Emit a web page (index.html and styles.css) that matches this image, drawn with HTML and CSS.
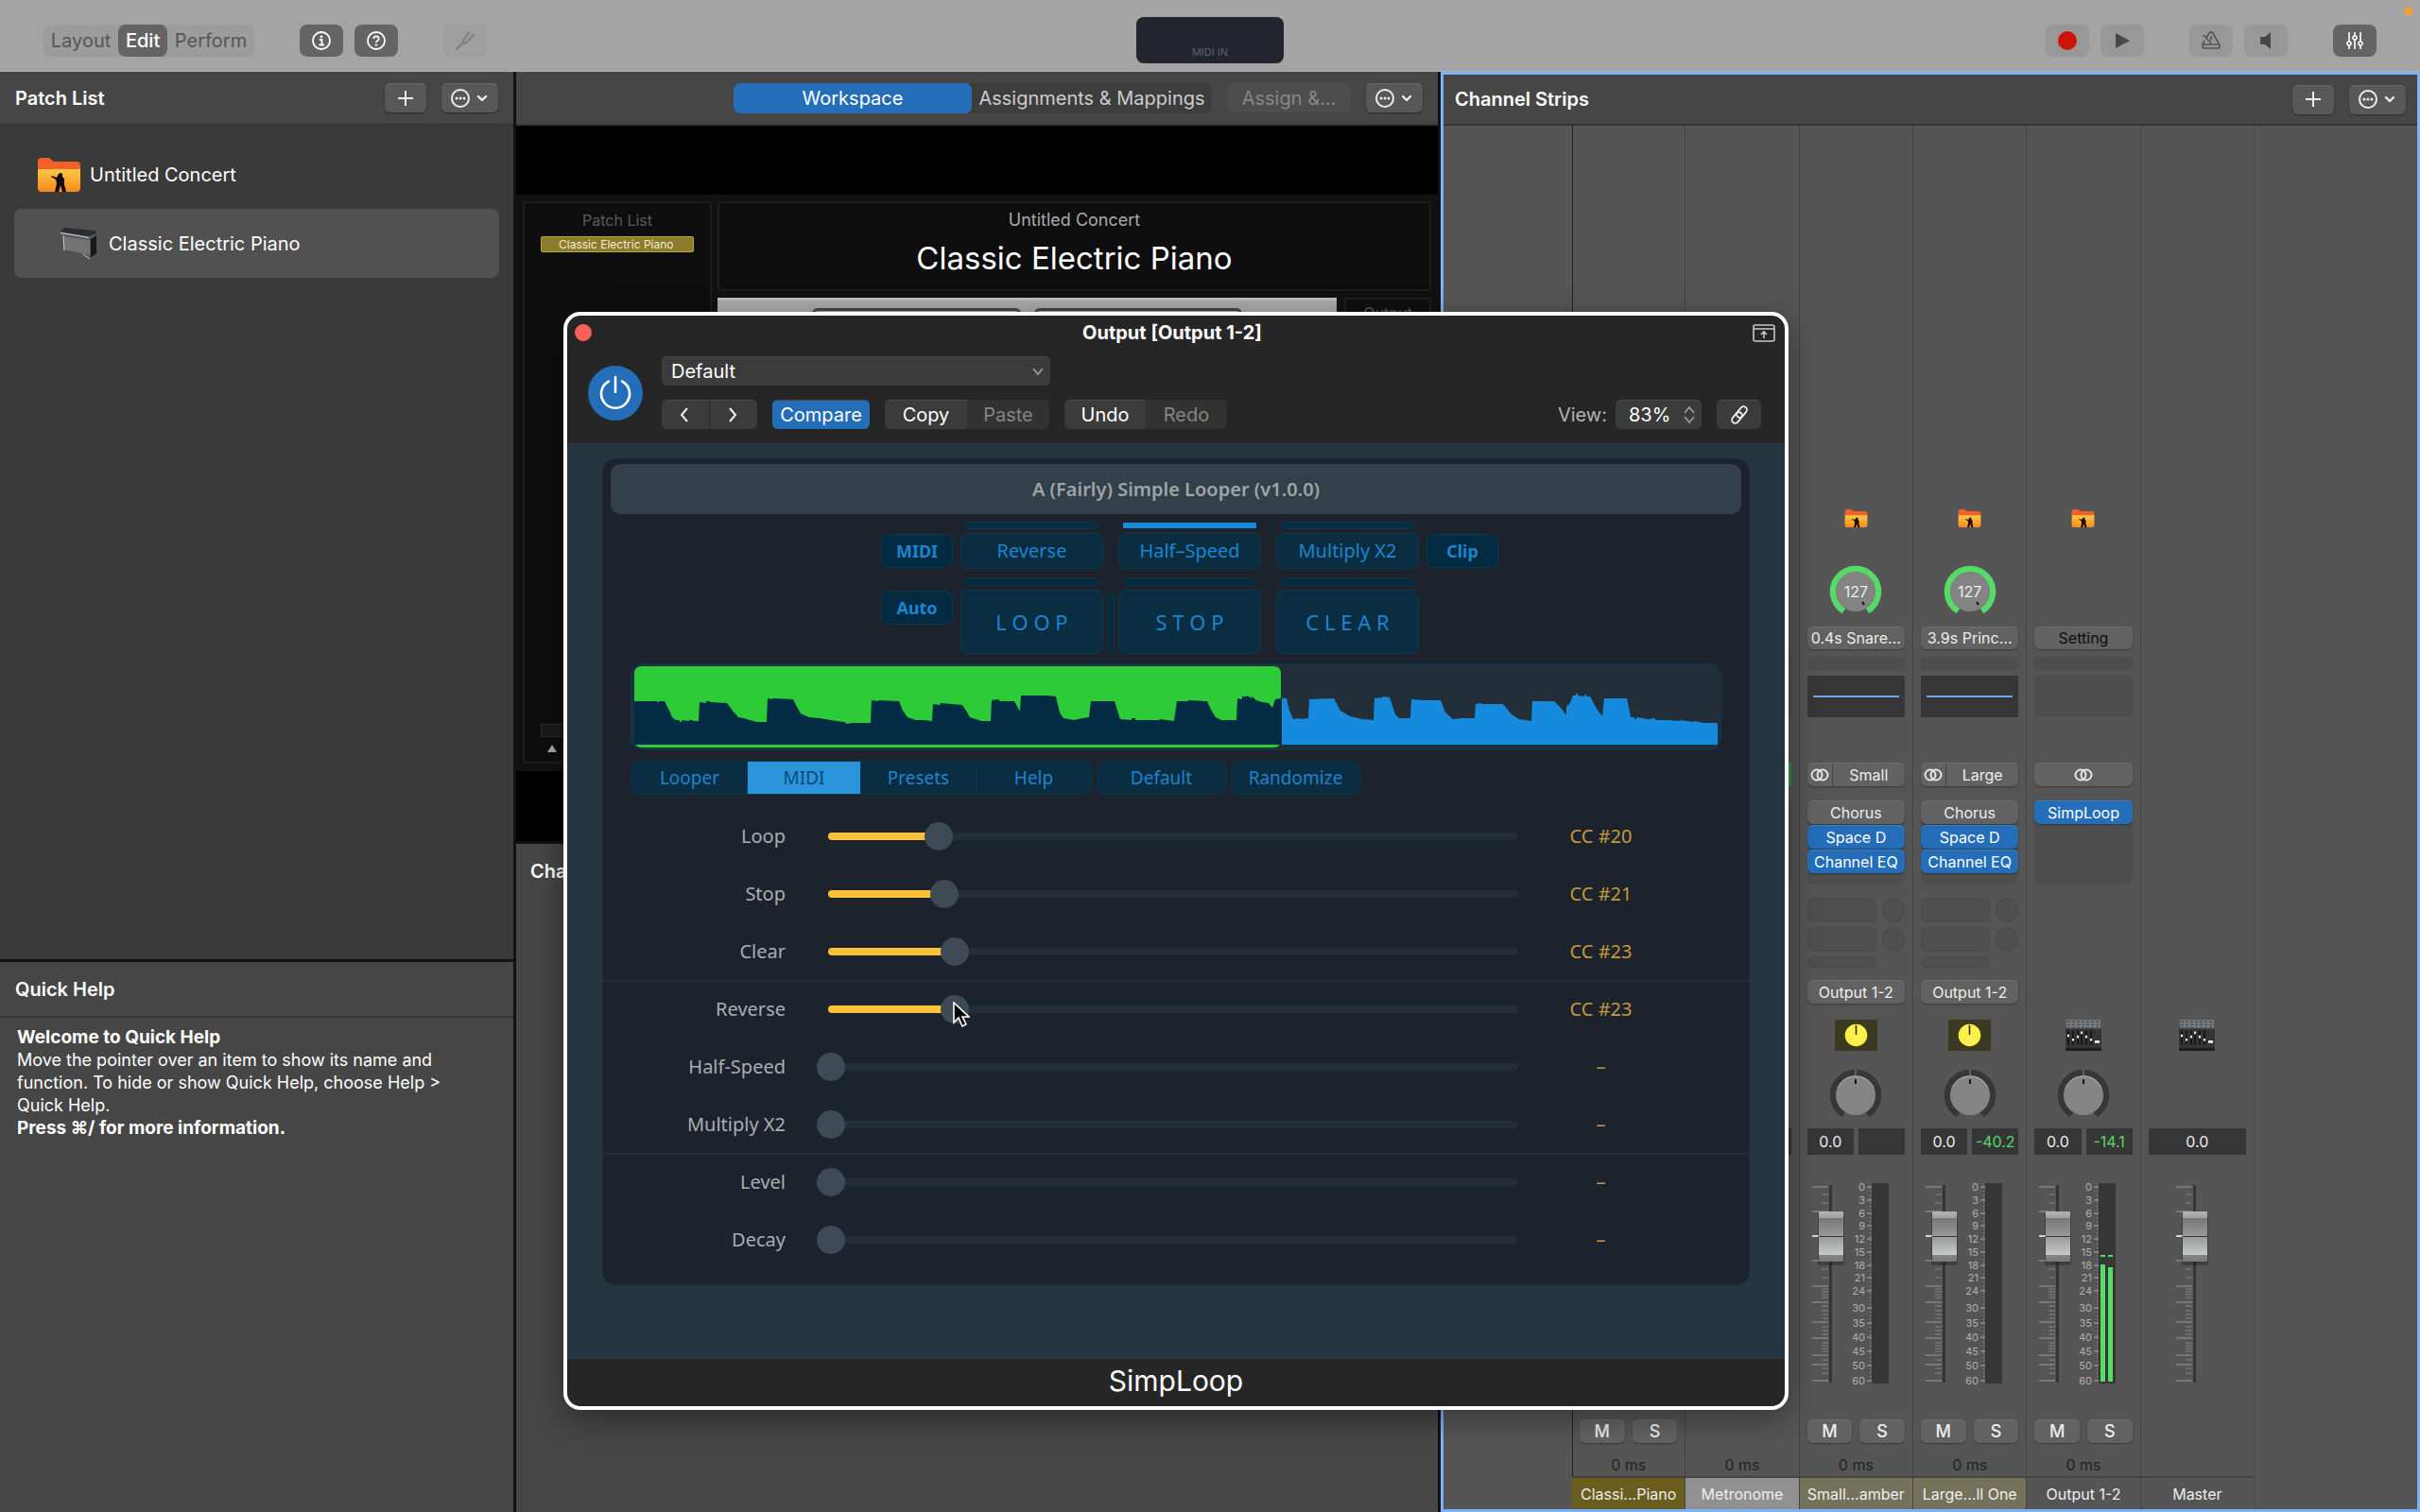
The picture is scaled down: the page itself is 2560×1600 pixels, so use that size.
FILE: index.html
```html
<!DOCTYPE html>
<html lang="en">
<head>
<meta charset="utf-8">
<title>Untitled Concert</title>
<link rel="stylesheet" href="styles.css">
</head>
<body>
<svg class="defs" aria-hidden="true">
  <defs>
    <linearGradient id="g-folder" x1="0" y1="0" x2="0" y2="1"><stop offset="0" stop-color="#ffc844"/><stop offset="1" stop-color="#f88a1c"/></linearGradient>
    <linearGradient id="g-cap" x1="0" y1="0" x2="0" y2="1">
      <stop offset="0" stop-color="#b4b4b4"/><stop offset=".13" stop-color="#a0a0a0"/><stop offset=".14" stop-color="#787878"/><stop offset=".48" stop-color="#989898"/>
      <stop offset=".52" stop-color="#9c9c9c"/><stop offset=".86" stop-color="#c6c9ca"/><stop offset=".87" stop-color="#858585"/><stop offset="1" stop-color="#7a7a7a"/>
    </linearGradient>
    <symbol id="i-folder" viewBox="0 0 45 36">
      <path d="M0 4q0-4 4-4h8l5 4h24q4 0 4 4v5H0z" fill="#f4602a"/>
      <path d="M0 12h45v20q0 4-4 4H4q-4 0-4-4z" fill="url(#g-folder)"/>
      <path d="M22 17q2-2 4 0v3l2 2v6l2 8h-4l-2-7-2 7h-4l2-9-1-4-5-3 1-1 5 2z" fill="#140c04"/>
    </symbol>
    <symbol id="i-more" viewBox="0 0 40 20">
      <circle cx="10" cy="10" r="9" fill="none" stroke="#eee" stroke-width="2"/>
      <circle cx="6" cy="10" r="1.5" fill="#eee"/><circle cx="10" cy="10" r="1.5" fill="#eee"/><circle cx="14" cy="10" r="1.5" fill="#eee"/>
      <path d="M29 8l4 4 4-4" fill="none" stroke="#eee" stroke-width="2.4" stroke-linecap="round" stroke-linejoin="round"/>
    </symbol>
    <symbol id="i-plus" viewBox="0 0 16 16"><path d="M8 0v16M0 8h16" stroke="#eee" stroke-width="2"/></symbol>
    <symbol id="i-stereo" viewBox="0 0 20 14"><g fill="none" stroke="#e6e6e6" stroke-width="2"><circle cx="7" cy="7" r="5.5"/><circle cx="13" cy="7" r="5.5"/></g></symbol>
    <symbol id="i-level" viewBox="0 0 56 56">
      <path d="M15.5 48.5A24 24 0 1 1 40.5 48.5" fill="none" stroke="#56db69" stroke-width="6.5"/>
      <circle cx="28" cy="28" r="21" fill="#838383"/><path d="M35 39l2 3" stroke="#111" stroke-width="2"/>
    </symbol>
    <symbol id="i-pan" viewBox="0 0 56 56">
      <path d="M15.5 48.5A24 24 0 1 1 40.5 48.5" fill="none" stroke="#373737" stroke-width="6.5"/>
      <path d="M28 1v6" stroke="#888"/><circle cx="28" cy="28" r="21" fill="#858585"/><path d="M9 20a21 21 0 0 1 38 0" fill="none" stroke="#aaa"/><path d="M28 11v5" stroke="#111" stroke-width="2"/>
    </symbol>
    <symbol id="i-aux" viewBox="0 0 45 33"><rect width="45" height="33" rx="2" fill="#3b391f"/><circle cx="22.500" cy="16.500" r="11.800" fill="#fdf04a"/><path d="M22.500 6v10" stroke="#222" stroke-width="1.500"/></symbol>
    <symbol id="i-desk" viewBox="0 0 38 31" preserveAspectRatio="none">
      <path d="M1 0h36v9H1z" fill="#757b78"/><path d="M2 2h34M2 5h34M2 8h34" stroke="#3c4a5c" stroke-dasharray="3 2"/><path d="M0 9h38v19H0z" fill="#343434"/><path d="M0 28h38v3H0z" fill="#1c1c1c"/>
      <path d="M3 11v14M8 11v14M13 11v14M17 11v14M22 11v14M27 11v14" stroke="#0e0e0e" stroke-width="1.500"/>
      <path d="M2 16h2M7 20h2M12 17h2M16 13h2M21 17h2M26 20h2M31 22h5" stroke="#eee" stroke-width="2.500"/>
    </symbol>
    <symbol id="i-fader" viewBox="0 0 40 218">
      <path d="M5 7h17M5 33h17M5 85h17M5 112h17M5 129h17M5 150h17M5 167h17M5 185h17M5 195h17M5 212h17" stroke="#9c9c9c" stroke-width="1.200"/>
      <path d="M15 15h7M15 24h7M15 94h7M15 103h7M15 115h7M15 118h7M15 121h7M15 124h7M15 133h7M15 138h7M15 142h7M15 146h7M15 155h7M15 159h7M15 163h7M15 172h7M15 175h7M15 178h7M15 181h7M15 190h7M15 199h7M15 204h7" stroke="#858585"/>
      <rect x="23" y="5" width="3" height="209" rx="1" fill="#353535"/>
      <path d="M5 59h8" stroke="#fff" stroke-width="1.500"/>
      <rect x="11" y="35" width="28" height="55" rx="2" fill="#000" opacity=".25"/>
      <rect x="12" y="33" width="26" height="53" rx="1" fill="url(#g-cap)"/>
      <path d="M12 59.500h26" stroke="#383838"/>
    </symbol>
    <symbol id="i-scale" viewBox="0 0 104 218">
      <g class="scale-text" text-anchor="end">
        <text x="61" y="11">0</text><text x="61" y="25">3</text><text x="61" y="39">6</text><text x="61" y="52">9</text><text x="61" y="66">12</text><text x="61" y="80">15</text><text x="61" y="94">18</text><text x="61" y="107">21</text><text x="61" y="121">24</text><text x="61" y="139">30</text><text x="61" y="155">35</text><text x="61" y="170">40</text><text x="61" y="185">45</text><text x="61" y="200">50</text><text x="61" y="216">60</text>
      </g>
      <path d="M63 7h5M63 21h5M63 35h5M63 48h5M63 62h5M63 76h5M63 90h5M63 103h5M63 117h5M63 135h5M63 151h5M63 166h5M63 181h5M63 196h5M63 212h5" stroke="#aaa"/>
      <path d="M66.500 7v205" stroke="#999" stroke-dasharray="1 3"/>
      <rect x="68" y="3" width="18" height="212" rx="2" fill="#363636"/>
    </symbol>
  </defs>
</svg>

<header class="toolbar">
  <div class="tools">
    <div class="modes"><button>Layout</button><button class="on">Edit</button><button>Perform</button></div>
    <div class="pair">
      <button class="tool dark" aria-label="Inspector"><svg width="20" height="20" viewBox="0 0 20 20"><circle cx="10" cy="10" r="9" fill="none" stroke="#fff" stroke-width="1.800"/><path d="M8 9h2.500v5.500M7.500 14.500h5.500" fill="none" stroke="#fff" stroke-width="1.800"/><circle cx="10" cy="5.800" r="1.400" fill="#fff"/></svg></button>
      <button class="tool dark" aria-label="Quick Help"><svg width="20" height="20" viewBox="0 0 20 20"><circle cx="10" cy="10" r="9" fill="none" stroke="#fff" stroke-width="1.800"/><path d="M7.300 8q0-2.700 2.700-2.700T12.700 8q0 1.500-1.500 2.200T10 12" fill="none" stroke="#fff" stroke-width="1.800"/><circle cx="10" cy="14.600" r="1.200" fill="#fff"/></svg></button>
    </div>
    <button class="tool faint" aria-label="Tuner"><svg width="22" height="22" viewBox="0 0 22 22"><path d="M2 20l6-6M15 2l-6 9q-2 4 1 3t4-3l6-6" fill="none" stroke="#7e7e7e" stroke-width="2" stroke-linecap="round"/></svg></button>
  </div>
  <div class="lcd">MIDI IN</div>
  <div class="tools end">
    <div class="pair">
      <button class="tool" aria-label="Record"><svg width="20" height="20"><circle cx="10" cy="10" r="10" fill="#cc1508"/></svg></button>
      <button class="tool" aria-label="Play"><svg width="16" height="18"><path d="M1 1l15 8-15 8z" fill="#484848"/></svg></button>
    </div>
    <div class="pair">
      <button class="tool" aria-label="Metronome"><svg width="22" height="20" viewBox="0 0 22 20"><path d="M6 7l3-5q2-2 4 0l6 11M4 10l-2 4M2 14h18v2q0 2-2 2H4q-2 0-2-2zM3 4l8 9M11 5v5" fill="none" stroke="#555" stroke-width="1.700"/></svg></button>
      <button class="tool" aria-label="Mute"><svg width="14" height="18"><path d="M1 6q0-1 1-1h4l6-5v18l-6-5H2q-1 0-1-1z" fill="#484848"/></svg></button>
    </div>
    <button class="tool dark" aria-label="Mixer"><svg width="20" height="20" viewBox="0 0 20 20"><path d="M4 1v18M10 1v18M16 1v18" stroke="#fff" stroke-width="1.600"/><g fill="#646464" stroke="#fff" stroke-width="1.600"><circle cx="4" cy="13" r="2"/><circle cx="10" cy="7" r="2"/><circle cx="16" cy="13" r="2"/></g></svg></button>
  </div>
  <span class="privacy-dot"></span>
</header>

<main class="desk">
  <aside class="side">
    <header class="head"><h2>Patch List</h2><button class="btn sq" aria-label="Add"><svg width="16" height="16"><use href="#i-plus"/></svg></button><button class="btn menu" aria-label="Actions"><svg width="40" height="20"><use href="#i-more"/></svg></button></header>
    <ul class="patches">
      <li><svg width="45" height="36"><use href="#i-folder"/></svg>Untitled Concert</li>
      <li class="patch on"><svg width="40" height="34" viewBox="0 0 40 34"><path d="M1 4L5 0l33 3 1 4v20l-6 4V12L1 8z" fill="#2a2c2f"/><path d="M1 4l30 5 8-3v3l-7 4L1 8z" fill="#55585c"/><path d="M1 5l30 5v1L1 6z" fill="#d5d8db"/><path d="M4 9l28 4v16L5 23z" fill="#737373"/><path d="M4 8l1 16M25 28l7 5" stroke="#ccc" fill="none"/><path d="M33 12l6-4v19l-6 4z" fill="#17181a"/></svg>Classic Electric Piano</li>
    </ul>
    <section class="help">
      <header class="head"><h2>Quick Help</h2></header>
      <p><b>Welcome to Quick Help</b><br>Move the pointer over an item to show its name and function. To hide or show Quick Help, choose Help &gt; Quick Help.<br><b>Press ⌘/ for more information.</b></p>
    </section>
  </aside>

  <section class="work">
    <header class="head right">
      <div class="views"><button class="on">Workspace</button><button>Assignments &amp; Mappings</button></div>
      <button class="btn assign" disabled>Assign &amp;...</button>
      <button class="btn menu" aria-label="Actions"><svg width="40" height="20"><use href="#i-more"/></svg></button>
    </header>
    <div class="stage">
      <div class="concert">
        <div class="box list"><span class="cap">Patch List</span><span class="chip">Classic Electric Piano</span><span class="slot-bar"></span><svg width="10" height="8"><path d="M5 0l5 8H0z" fill="#aaa"/></svg></div>
        <div class="right-side">
          <div class="box name"><p>Untitled Concert</p><h1>Classic Electric Piano</h1></div>
          <div class="instrument"><div class="keys"><i></i><i></i></div><div class="box out">Output</div></div>
        </div>
      </div>
    </div>
    <header class="head plain"><h2>Channel Strips</h2></header>
  </section>

  <section class="mixer">
    <header class="head"><h2>Channel Strips</h2><button class="btn sq" aria-label="Add channel"><svg width="16" height="16"><use href="#i-plus"/></svg></button><button class="btn menu" aria-label="Actions"><svg width="40" height="20"><use href="#i-more"/></svg></button></header>
    <div class="strips">
      <div class="strip">
        <div class="ms"><button class="btn">M</button><button class="btn">S</button></div><div class="delay">0 ms</div><div class="label gold">Classi...Piano</div>
      </div>
      <div class="strip">
        <div class="gain"></div><div class="eq off"></div><div class="io"><span class="green"></span></div><div class="fx"></div><div class="vals"><span></span></div>
        <div class="delay">0 ms</div><div class="label silver">Metronome</div>
      </div>
      <div class="strip">
        <svg class="folder" width="25" height="19"><use href="#i-folder"/></svg>
        <div class="knob"><svg width="56" height="56"><use href="#i-level"/></svg><span>127</span></div>
        <button class="btn setting">0.4s Snare...</button><div class="gain"></div><div class="eq"></div>
        <div class="io"><button class="btn st" aria-label="Format"><svg width="20" height="14"><use href="#i-stereo"/></svg></button><button class="btn">Small</button></div>
        <div class="fx"><button class="btn">Chorus</button><button class="btn blue">Space D</button><button class="btn blue">Channel EQ</button></div>
        <div class="sends"><i></i><b></b><i></i><b></b><i></i></div>
        <button class="btn dest">Output 1-2</button>
        <svg class="kind" width="45" height="33"><use href="#i-aux"/></svg>
        <svg class="pan" width="56" height="56"><use href="#i-pan"/></svg>
        <div class="vals"><span>0.0</span><span></span></div>
        <svg class="fader" width="104" height="218"><use href="#i-scale" width="104" height="218"/><use href="#i-fader" width="40" height="218"/></svg>
        <div class="ms"><button class="btn">M</button><button class="btn">S</button></div><div class="delay">0 ms</div><div class="label olive">Small...amber</div>
      </div>
      <div class="strip">
        <svg class="folder" width="25" height="19"><use href="#i-folder"/></svg>
        <div class="knob"><svg width="56" height="56"><use href="#i-level"/></svg><span>127</span></div>
        <button class="btn setting">3.9s Princ...</button><div class="gain"></div><div class="eq"></div>
        <div class="io"><button class="btn st" aria-label="Format"><svg width="20" height="14"><use href="#i-stereo"/></svg></button><button class="btn">Large</button></div>
        <div class="fx"><button class="btn">Chorus</button><button class="btn blue">Space D</button><button class="btn blue">Channel EQ</button></div>
        <div class="sends"><i></i><b></b><i></i><b></b><i></i></div>
        <button class="btn dest">Output 1-2</button>
        <svg class="kind" width="45" height="33"><use href="#i-aux"/></svg>
        <svg class="pan" width="56" height="56"><use href="#i-pan"/></svg>
        <div class="vals"><span>0.0</span><span class="lit">-40.2</span></div>
        <svg class="fader" width="104" height="218"><use href="#i-scale" width="104" height="218"/><use href="#i-fader" width="40" height="218"/></svg>
        <div class="ms"><button class="btn">M</button><button class="btn">S</button></div><div class="delay">0 ms</div><div class="label olive">Large...ll One</div>
      </div>
      <div class="strip">
        <svg class="folder" width="25" height="19"><use href="#i-folder"/></svg>
        <button class="btn setting unset">Setting</button><div class="gain"></div><div class="eq off"></div>
        <div class="io"><button class="btn" aria-label="Format"><svg width="20" height="14"><use href="#i-stereo"/></svg></button></div>
        <div class="fx"><button class="btn blue">SimpLoop</button></div>
        <svg class="kind" width="38" height="33"><use href="#i-desk"/></svg>
        <svg class="pan" width="56" height="56"><use href="#i-pan"/></svg>
        <div class="vals"><span>0.0</span><span class="lit">-14.1</span></div>
        <svg class="fader" width="104" height="218"><use href="#i-scale" width="104" height="218"/><use href="#i-fader" width="40" height="218"/><path d="M70 89h5v124h-5zM78 92h5v121h-5zM70 79h5v2h-5zM78 79h5v2h-5z" fill="#56db69"/></svg>
        <div class="ms"><button class="btn">M</button><button class="btn">S</button></div><div class="delay">0 ms</div><div class="label">Output 1-2</div>
      </div>
      <div class="strip">
        <svg class="kind" width="38" height="33"><use href="#i-desk"/></svg>
        <div class="vals"><span>0.0</span></div>
        <svg class="fader" width="104" height="218"><use href="#i-fader" x="24" width="40" height="218"/></svg>
        <div class="label">Master</div>
      </div>
    </div>
  </section>
</main>

<section class="plugin" aria-label="Output [Output 1-2]">
  <header class="titlebar"><button class="close" aria-label="Close"></button><h2>Output [Output 1-2]</h2><svg width="24" height="19" viewBox="0 0 24 19"><rect x="1" y="1" width="22" height="17" rx="2" fill="none" stroke="#c8c8c8" stroke-width="1.600"/><path d="M1 5h22M12 15V8M9 11l3-3 3 3" fill="none" stroke="#c8c8c8" stroke-width="1.600"/></svg></header>
  <div class="controls">
    <button class="power" aria-label="Power"><svg width="36" height="36" viewBox="0 0 36 36"><path d="M11 5.500a15 15 0 1 0 14 0M18 1v16" fill="none" stroke="#fff" stroke-width="2.600" stroke-linecap="round"/></svg></button>
    <div class="rows">
      <div class="pick"><select aria-label="Preset"><option>Default</option></select><svg width="12" height="8"><path d="M1 1l5 6 5-6" fill="none" stroke="#999" stroke-width="1.800"/></svg></div>
      <div class="row">
        <div class="group nav"><button aria-label="Previous"><svg width="10" height="18"><path d="M9 2L3 9l6 7" fill="none" stroke="#eee" stroke-width="2"/></svg></button><button aria-label="Next"><svg width="10" height="18"><path d="M1 2l6 7-6 7" fill="none" stroke="#eee" stroke-width="2"/></svg></button></div>
        <div class="group"><button class="compare">Compare</button></div>
        <div class="group copy"><button>Copy</button><button disabled>Paste</button></div>
        <div class="group undo"><button>Undo</button><button disabled>Redo</button></div>
        <label class="view" for="zoom">View:</label>
        <div class="pick zoom"><select id="zoom"><option>83%</option></select><svg width="12" height="18"><path d="M1 7l5-6 5 6M1 11l5 6 5-6" fill="none" stroke="#999" stroke-width="1.800"/></svg></div>
        <div class="group"><button class="link" aria-label="Link"><svg width="22" height="22" viewBox="0 0 22 22"><g fill="none" stroke="#eee" stroke-width="1.800"><rect x="7" y="4.500" width="13" height="7" rx="3.500" transform="rotate(-50 13.500 8)"/><rect x="2" y="10.500" width="13" height="7" rx="3.500" transform="rotate(-50 8.500 14)"/></g></svg></button></div>
      </div>
    </div>
  </div>
  <div class="body">
    <div class="looper">
      <h3>A (Fairly) Simple Looper (v1.0.0)</h3>
      <div class="pads">
        <i class="led c2"></i><i class="led c4 on"></i><i class="led c6"></i>
        <button class="small c1">MIDI</button><button class="pad c2">Reverse</button><button class="pad c4">Half–Speed</button><button class="pad c6">Multiply X2</button><button class="small c7">Clip</button>
        <i class="led low c2"></i><i class="led low c4"></i><i class="led low c6"></i>
        <button class="small c1">Auto</button><button class="pad big c2">L O O P</button><i class="bar c3"></i><button class="pad big c4">S T O P</button><button class="pad big c6">C L E A R</button>
      </div>
      <svg class="wave" viewBox="0 0 1154 92" preserveAspectRatio="none">
        <rect x="1" y="1" width="1152" height="90" rx="12" fill="#232f38" stroke="#12334a" stroke-width="2"/>
        <path d="M12 3H680q8 0 8 8V81q0 8-8 8H12q-8 0-8-8V11q0-8 8-8z" fill="#2ccb37"/>
        <path fill="#022c43" d="M4 86V40H28V41H30V40H36L39 46 41 50 44 57 48 60H52V62H54V60L62 61V60H66V61H72L73 41 80 42V40H84V41L102 42 108 50 114 57 120 58 126 60 134 62 144 62 145 37 150 38V37L172 38 176 46 180 53 189 57 200 58 218 61 226 62 229 64 234 63H254L255 39 262 40V39L284 40 288 50 293 57 302 60H310L319 61 320 43 328 44V42L351 44 355 50 359 57 371 61H381L382 39 390 38V40L406 40 412 51 413 34 440 34 450 35 454 52 458 58 469 60 478 58 485 57 487 40H512L515 50 518 59 530 60V58H534V60L560 60V59L575 61 578 40 590 40V39L610 40 614 49 619 57 625 60H641L642 37 647 38V35H652V34L657 37V35L662 39 668 41 675 42 679 47 682 38 688 37V86z"/>
        <path fill="#168bde" d="M689 86V37H694L697 50 701 59 708 58V59L717 58 718 38 744 37 751 50 761 56 774 59 786 60 787 37 796 36V35L803 36 809 54 813 58H825L826 38 840 39 857 39 862 52 870 59 880 58 893 58 894 43 900 42V43L923 43 932 54 940 59 953 61 954 40 977 40 984 47 990 55V46L994 42 997 34H1000V32H1002V34L1009 35V33H1011V35H1015L1022 48 1028 56 1030 37H1054L1058 57H1062V59H1064V57L1076 59 1084 58V60L1098 60 1110 61V60L1125 62V61L1136 63 1149 63 1150 65V86z"/>
      </svg>
      <div class="tabs">
        <div class="tabset"><button>Looper</button><button class="on">MIDI</button><button>Presets</button><button>Help</button></div>
        <button class="solo">Default</button><button class="solo">Randomize</button>
      </div>
      <div class="params">
        <div class="param"><label for="p1">Loop</label><div class="slider"><span><i style="width:17%"></i></span><input id="p1" type="range" max="127" value="20"></div><output for="p1">CC #20</output></div>
        <div class="param"><label for="p2">Stop</label><div class="slider"><span><i style="width:17%"></i></span><input id="p2" type="range" max="127" value="21"></div><output for="p2">CC #21</output></div>
        <div class="param"><label for="p3">Clear</label><div class="slider"><span><i style="width:18%"></i></span><input id="p3" type="range" max="127" value="23"></div><output for="p3">CC #23</output></div>
      </div>
      <div class="params">
        <div class="param"><label for="p4">Reverse</label><div class="slider"><span><i style="width:18%"></i></span><input id="p4" type="range" max="127" value="23"></div><output for="p4">CC #23</output></div>
        <div class="param"><label for="p5">Half-Speed</label><div class="slider"><span></span><input id="p5" type="range" max="127" value="0"></div><output for="p5">–</output></div>
        <div class="param"><label for="p6">Multiply X2</label><div class="slider"><span></span><input id="p6" type="range" max="127" value="0"></div><output for="p6">–</output></div>
      </div>
      <div class="params">
        <div class="param"><label for="p7">Level</label><div class="slider"><span></span><input id="p7" type="range" max="127" value="0"></div><output for="p7">–</output></div>
        <div class="param"><label for="p8">Decay</label><div class="slider"><span></span><input id="p8" type="range" max="127" value="0"></div><output for="p8">–</output></div>
      </div>
    </div>
  </div>
  <footer>SimpLoop</footer>
  <svg class="cursor" width="18" height="28" viewBox="0 0 18 28"><path d="M1 1v21l5-5 4 9 4-2-4-8h7z" fill="#000" stroke="#fff" stroke-width="1.600"/></svg>
</section>
</body>
</html>
```
FILE: styles.css
```css
* { box-sizing: border-box; }
body {
  margin: 0; min-height: 100vh; display: flex; flex-direction: column; position: relative;
  background: #464646; color: #eee; font: 20px/24px Inter, "Liberation Sans", sans-serif;
}
button, select, input { font: inherit; color: inherit; margin: 0; padding: 0; border: 0; background: none; }
h1, h2, h3, p, ul { margin: 0; padding: 0; list-style: none; font-weight: 400; }
svg { display: block; flex: none; }
.defs { position: absolute; width: 0; height: 0; }
.scale-text { font: 11px Inter, sans-serif; fill: #b0b0b0; }

/* Main toolbar */
.toolbar { height: 76px; padding: 0 46px; display: grid; grid-template-columns: 1fr auto 1fr; align-items: center; background: #a4a4a4; border-bottom: 1px solid #b0b0b0; position: relative; }
.tools { display: flex; gap: 48px; padding-top: 10px; }
.tools.end { justify-content: flex-end; }
.pair { display: flex; gap: 12px; }
.tool { width: 46px; height: 34px; border-radius: 8px; background: #989898; display: grid; place-items: center; }
.tool.dark { background: #646464; }
.tool.faint { background: #9f9f9f; }
.modes { display: flex; width: 223px; height: 34px; border-radius: 8px; background: #9c9c9c; color: #555; }
.modes button { flex: auto; border-radius: 8px; }
.modes .on { background: #646464; color: #fff; font-weight: 500; }
.lcd { width: 156px; height: 49px; margin-top: 10px; border-radius: 8px; background: #22252e; color: #596273; font-size: 11px; line-height: 16px; padding-top: 29px; text-align: center; }
.privacy-dot { position: absolute; right: 7px; top: 7px; width: 10px; height: 10px; border-radius: 50%; background: #eba23c; }

/* Shell */
.desk { flex: 1; display: grid; grid-template-columns: 546px minmax(0, 1fr) 1036px; }
.head { height: 57px; padding: 0 16px; display: flex; align-items: center; gap: 16px; background: #464646; border-bottom: 2px solid #363636; flex: none; }
.head h2 { flex: 1; font-size: 20px; font-weight: 600; color: #fff; }
.head.right { justify-content: flex-end; }
.head.plain { border: 0; padding: 0 15px; }
.btn { background: #626262; border-radius: 6px; box-shadow: inset 0 1px #707070, 0 1px 2px #0005; display: grid; place-items: center; }
.head .btn { height: 31px; background: #585858; box-shadow: inset 0 1px #686868, 0 1px 2px #0006; }
.sq { width: 44px; }
.menu { width: 60px; }

/* Left side */
.side { display: flex; flex-direction: column; border-right: 3px solid #121212; background: #3a3a3a; }
.patches { flex: 1; padding: 15px; }
.patches li { height: 73px; padding-left: 25px; display: flex; align-items: center; gap: 10px; color: #fff; border-radius: 8px; }
.patches .on { padding-left: 48px; gap: 12px; background: #515151; }
.help { height: 585px; background: #464646; border-top: 3px solid #121212; }
.help p { padding: 9px 60px 0 18px; font-size: 18px; line-height: 24px; color: #fff; }
.help b { font-size: 19px; font-weight: 700; }
.help .head { height: 59px; }

/* Workspace */
.work { display: flex; flex-direction: column; border-right: 3px solid #121212; }
.views { display: flex; height: 32px; border-radius: 7px; background: #3d3d3d; color: #ccc; }
.views button { width: 254px; border-radius: 7px; }
.views .on { width: 252px; background: #246eb9; color: #fff; }
.head .assign { width: 131px; background: #4d4d4d; color: #888; box-shadow: none; }
.stage { height: 760px; padding: 73px 0 74px; background: #000; border-bottom: 3px solid #121212; }
.concert { height: 100%; background: #111; padding: 7px 7px 8px; display: flex; gap: 6px; }
.box { border: 2px solid #1e1e1e; border-radius: 4px; background: #0e0e0e; }
.list { width: 200px; padding: 8px 17px 10px; display: flex; flex-direction: column; font-size: 16px; line-height: 20px; color: #5c5c5c; }
.list .cap { text-align: center; }
.chip { margin-top: 7px; height: 17px; background: #8a7c2a; border: 1px solid #b8a638; color: #f2eed0; font-size: 12px; line-height: 15px; padding-left: 18px; border-radius: 2px; }
.slot-bar { margin-top: auto; height: 14px; border: 1px solid #2c2c2c; background: #1a1a1a; }
.list svg { margin: 8px 7px 0; }
.right-side { flex: 1; display: flex; flex-direction: column; gap: 7px; }
.name { height: 95px; text-align: center; padding-top: 6px; color: #aaa; }
.name p { font-size: 18px; }
.name h1 { font-size: 33px; line-height: 56px; color: #fff; }
.instrument { flex: 1; display: flex; gap: 8px; }
.keys { flex: 1; background: #aaa; border-top: 3px solid #bdbdbd; padding: 8px 100px; display: flex; gap: 14px; }
.keys i { flex: 1; height: 60px; border: 3px solid #444; border-radius: 6px; }
.out { width: 92px; text-align: center; font-size: 16px; color: #555; padding-top: 2px; }

/* Mixer */
.mixer { border: 3px solid #7bb2f8; display: flex; flex-direction: column; background: #555; }
.mixer .head { height: 54px; padding: 0 12px; }
.strips { flex: 1; display: grid; grid-template-columns: repeat(6, 1fr); width: 858px; padding-left: 136px; background: linear-gradient(#222, #222) 136px 0 / 1px 100% no-repeat #555; }
.strip {
  display: grid; align-content: end; padding: 0 8px; border-right: 1px solid #444; min-width: 0;
  grid-template-rows: 59px 65px 32px 20px 92px 40px 103px 87px 42px 52px 63px 55px 253px 38px 22px 35px;
  grid-template-columns: minmax(0, 1fr); align-items: start; justify-items: center; font-size: 16px; line-height: 24px;
}
.strip:last-child { border-color: #4a4a4a; }
.folder { grid-row: 1; }
.knob { grid-row: 2; display: grid; place-items: center; }
.knob > * { grid-area: 1 / 1; }
.setting { grid-row: 3; width: 100%; height: 24px; }
.unset { color: #0c0c0c; }
.gain { grid-row: 4; width: 100%; height: 14px; background: #4e4e4e; border-radius: 2px; }
.eq { grid-row: 5; width: 100%; height: 44px; background: linear-gradient(#6fa8e8, #6fa8e8) 6px 21px / calc(100% - 12px) 2px no-repeat #363636; }
.eq.off { background: #4e4e4e; }
.io { grid-row: 6; width: 100%; display: flex; height: 25px; }
.io .btn { flex: 1; border-radius: 0 6px 6px 0; }
.io .btn:only-child { border-radius: 6px; }
.io .st { flex: none; width: 27px; border-radius: 6px 0 0 6px; border-right: 1px solid #4c4c4c; }
.io .green { flex: 1; background: #2f9440; }
.fx { grid-row: 7; width: 100%; height: 89px; background: #4e4e4e; border-radius: 6px; display: flex; flex-direction: column; gap: 1px; }
.fx .btn { height: 25px; }
.btn.blue { background: #246eb9; color: #fff; box-shadow: inset 0 1px #3b80c6, 0 1px 2px #0005; }
.sends { grid-row: 8; width: 100%; display: grid; grid-template: 26px 26px 12px / 1fr 24px; gap: 5px 6px; }
.sends > * { background: #4f4f4f; border: 1px solid #4a4a4a; border-radius: 6px; }
.sends b { border-radius: 50%; }
.dest { grid-row: 9; width: 100%; height: 25px; }
.kind { grid-row: 10; }
.pan { grid-row: 11; }
.vals { grid-row: 12; width: 100%; display: flex; gap: 5px; }
.vals span { flex: 1; height: 28px; background: #363636; text-align: center; line-height: 28px; }
.vals .lit { color: #56db69; }
.fader { grid-row: 13; justify-self: start; }
.ms { grid-row: 14; width: 100%; display: flex; gap: 8px; font-weight: 500; font-size: 18px; }
.ms .btn { flex: 1; height: 25px; }
.delay { grid-row: 15; color: #222; line-height: 20px; }
.label { grid-row: 16; justify-self: stretch; margin: 0 -8px; height: 35px; line-height: 34px; border-top: 2px solid #444; text-align: center; white-space: nowrap; }
.gold { background: #6b5d1e; }
.silver { background: #919191; }
.olive { background: #74725a; }

/* Plug-in window floating over the desk */
.plugin { position: absolute; left: 596px; top: 330px; width: 1296px; border: 4px solid #fff; border-radius: 18px; overflow: hidden; background: #262626; display: flex; flex-direction: column; box-shadow: 0 8px 32px #0006; }
.titlebar { height: 36px; padding: 0 10px 0 8px; display: flex; align-items: center; }
.titlebar h2 { flex: 1; text-align: center; font-size: 20px; font-weight: 700; color: #fff; }
.close { width: 18px; height: 18px; border-radius: 50%; background: #ff6158; }
.controls { display: flex; gap: 20px; padding: 7px 25px 15px 22px; align-items: center; }
.power { width: 58px; height: 58px; border-radius: 50%; background: #246eb9; display: grid; place-items: center; }
.rows { flex: 1; display: flex; flex-direction: column; gap: 15px; }
.pick { width: 411px; display: grid; align-items: center; justify-items: end; }
.pick > * { grid-area: 1 / 1; }
.pick svg { margin-right: 7px; pointer-events: none; }
.pick select { appearance: none; width: 100%; height: 31px; padding-left: 10px; border-radius: 6px; background: #3b3b3b; box-shadow: inset 0 1px #4a4a4a; color: #fff; }
.row { display: flex; gap: 16px; align-items: center; }
.group { display: flex; height: 31px; border-radius: 6px; overflow: hidden; background: #323232; box-shadow: inset 0 1px #464646; }
.group button { background: #3b3b3b; display: grid; place-items: center; box-shadow: inset 0 1px #4a4a4a; color: #fff; }
.group button:disabled { background: #323232; color: #848484; box-shadow: none; }
.nav button { width: 50px; }
.nav button:first-child { width: 51px; border-right: 1px solid #262626; padding-right: 4px; }
.group .compare { width: 103px; background: #246eb9; }
.copy button { width: 87px; }
.undo button { width: 86px; }
.view { margin-left: auto; margin-right: -7px; color: #b4b4b4; }
.zoom { width: 91px; }
.zoom select { padding-left: 14px; }
.link { width: 47px; }
.body { background: #263640; padding: 16px 37px 78px; font-family: "Noto Sans", "Open Sans", sans-serif; font-size: 20px; }
.looper { background: #1c232d; border-radius: 14px; padding: 5px 0 17px; border: 1px solid #202a35; }
.looper h3 { margin: 0 8px; height: 53px; line-height: 53px; border-radius: 10px; background: #333f49; color: #9ea4a8; text-align: center; font-size: 20px; font-weight: 600; }
.pads { display: grid; grid-template-columns: 80px 151px 8px 151px 8px 151px 80px; column-gap: 4px; padding: 8px 0 10px 294px; align-items: start; }
.pads button { border: 1px solid #0b3a50; background: #0a2d41; color: #1a85d0; border-radius: 8px; height: 38px; margin-top: 4px; }
.pads .small { width: 76px; background: #022a40; font-size: 18px; font-weight: 700; height: 36px; margin-top: 5px; }
.pads .big { height: 68px; font-size: 22px; }
.led { height: 8px; margin: 0 5px; border-radius: 4px; background: #052c42; border: 1px solid #0b3448; }
.led.on { background: #168bde; border: 0; height: 6px; margin-top: 1px; border-radius: 1px; }
.led.low { margin-top: 10px; }
.bar { height: 64px; margin-top: 7px; border-radius: 3px; border: 1px solid #0b3448; background: #0a2939; }
.c1 { grid-column: 1; } .c2 { grid-column: 2; } .c3 { grid-column: 3; } .c4 { grid-column: 4; } .c6 { grid-column: 6; }
.c7 { grid-column: 7; justify-self: end; }
.wave { width: calc(100% - 58px); height: 92px; margin-left: 29px; }
.tabs { display: flex; gap: 5px; margin: 11px 14px 0; padding: 0 0 12px 16px; border-bottom: 1px solid #222d37; color: #1a85d0; font-size: 19px; }
.tabset { display: flex; border: 1px solid #0b3448; border-radius: 8px; overflow: hidden; background: #0a2d41; height: 36px; }
.tabset button { width: 122px; border-right: 1px solid #0b3a50; }
.tabset button:last-child { width: 121px; border: 0; }
.tabset .on { background: #2b95dc; color: #0c4a75; width: 120px; }
.solo { width: 137px; height: 36px; border: 1px solid #0b3448; border-radius: 8px; background: #0a2d41; }
.params + .params { box-shadow: inset 0 2px #222f38; }
.param { height: 61px; padding-right: 114px; display: grid; grid-template-columns: 193px 1fr 85px; column-gap: 33px; align-items: center; color: #a9aeb2; }
.param label { text-align: right; }
.param output { color: #c4993a; text-align: center; white-space: nowrap; }
.slider { display: grid; align-items: center; }
.slider > * { grid-area: 1 / 1; }
.slider span { height: 8px; margin: 0 12px; border-radius: 4px; background: #232e37; overflow: hidden; }
.slider i { display: block; height: 100%; background: #f8c136; }
.slider input { appearance: none; width: 100%; height: 30px; }
.slider input::-webkit-slider-thumb { appearance: none; width: 30px; height: 30px; border-radius: 50%; background: #3e4b55; }
.plugin footer { height: 50px; line-height: 46px; text-align: center; font-size: 30px; color: #fff; }
.cursor { position: absolute; left: 408px; top: 726px; }
```
